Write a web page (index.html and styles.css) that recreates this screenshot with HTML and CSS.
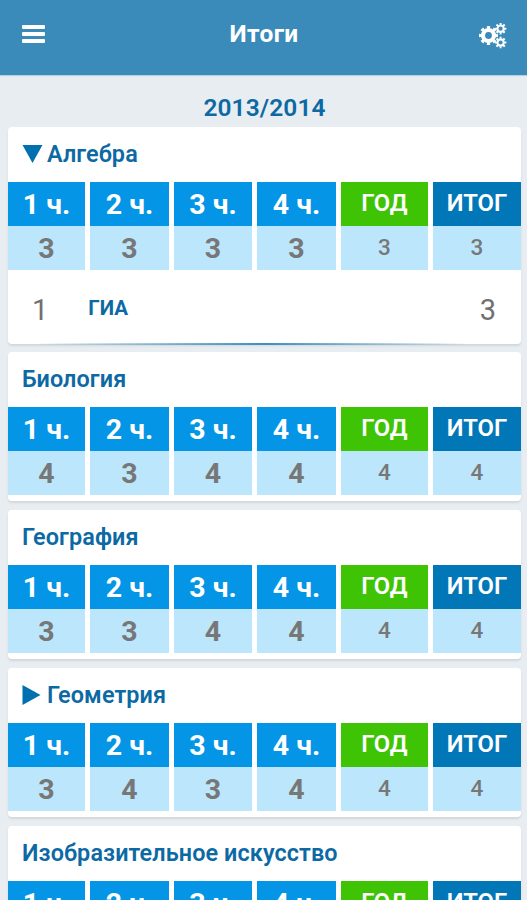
FILE: index.html
```html
<!DOCTYPE html>
<html lang="ru">
<head>
    <meta charset="UTF-8">
    <meta name="viewport" content="width=device-width, initial-scale=1">
    <title>Итоги</title>
    <link rel="stylesheet" href="styles.css">
</head>
<body>
    <header class="topbar">
        <svg class="menu-icon" viewBox="0 0 23 19">
            <rect y="0" width="23" height="4" rx="1"/>
            <rect y="7" width="23" height="4" rx="1"/>
            <rect y="14" width="23" height="4" rx="1"/>
        </svg>
        <h1>Итоги</h1>
        <svg class="settings-icon" viewBox="0 0 28 26">
            <circle class="ring-big" cx="9.5" cy="12.5" r="5.5"/>
            <circle class="teeth-big" cx="9.5" cy="12.5" r="8.2" pathLength="80"/>
            <circle class="ring-small" cx="21.6" cy="5.7" r="3.2"/>
            <circle class="teeth-small" cx="21.6" cy="5.7" r="4.8" pathLength="80"/>
            <circle class="ring-small" cx="21.6" cy="19.5" r="3.2"/>
            <circle class="teeth-small" cx="21.6" cy="19.5" r="4.8" pathLength="80"/>
        </svg>
    </header>

    <main>
        <h2 class="year">2013/2014</h2>

        <section class="card open">
            <h3><svg class="arrow down" viewBox="0 0 20 18"><path d="M0 0h20L10 18z"/></svg><span>Алгебра</span></h3>
            <div class="marks">
                <b>1 ч.</b><b>2 ч.</b><b>3 ч.</b><b>4 ч.</b><b class="god">ГОД</b><b class="itog">ИТОГ</b>
                <i>3</i><i>3</i><i>3</i><i>3</i><i class="small">3</i><i class="small">3</i>
            </div>
            <div class="exam">
                <span class="num">1</span>
                <span class="exam-name">ГИА</span>
                <span class="num">3</span>
            </div>
        </section>

        <section class="card">
            <h3><span>Биология</span></h3>
            <div class="marks">
                <b>1 ч.</b><b>2 ч.</b><b>3 ч.</b><b>4 ч.</b><b class="god">ГОД</b><b class="itog">ИТОГ</b>
                <i>4</i><i>3</i><i>4</i><i>4</i><i class="small">4</i><i class="small">4</i>
            </div>
        </section>

        <section class="card">
            <h3><span>География</span></h3>
            <div class="marks">
                <b>1 ч.</b><b>2 ч.</b><b>3 ч.</b><b>4 ч.</b><b class="god">ГОД</b><b class="itog">ИТОГ</b>
                <i>3</i><i>3</i><i>4</i><i>4</i><i class="small">4</i><i class="small">4</i>
            </div>
        </section>

        <section class="card">
            <h3><svg class="arrow right" viewBox="0 0 18 20"><path d="M0 0l18 10L0 20z"/></svg><span>Геометрия</span></h3>
            <div class="marks">
                <b>1 ч.</b><b>2 ч.</b><b>3 ч.</b><b>4 ч.</b><b class="god">ГОД</b><b class="itog">ИТОГ</b>
                <i>3</i><i>4</i><i>3</i><i>4</i><i class="small">4</i><i class="small">4</i>
            </div>
        </section>

        <section class="card">
            <h3><span>Изобразительное искусство</span></h3>
            <div class="marks">
                <b>1 ч.</b><b>2 ч.</b><b>3 ч.</b><b>4 ч.</b><b class="god">ГОД</b><b class="itog">ИТОГ</b>
            </div>
        </section>
    </main>
</body>
</html>
```
FILE: styles.css
```css
* {
    box-sizing: border-box;
}

body {
    margin: 0;
    height: 900px;
    overflow: hidden;
    background-color: #e8edf1;
    font-family: Roboto, "Liberation Sans", sans-serif;
}

/* Шапка */
.topbar {
    display: flex;
    justify-content: space-between;
    align-items: flex-start;
    height: 75px;
    padding: 0 20px 0 22px;
    background-color: #3b8bba;
    color: #fff;
    box-shadow: 0 1px 1px #b5d3df;
}

.topbar h1 {
    margin: 19px 0 0 4px;
    font-size: 24.5px;
    line-height: 30px;
    font-weight: 700;
    letter-spacing: 0.4px;
}

.menu-icon {
    width: 23px;
    height: 19px;
    margin-top: 25px;
    fill: #fff;
}

.settings-icon {
    width: 28px;
    height: 26px;
    margin-top: 23px;
    fill: none;
    stroke: #fff;
}

.ring-big {
    stroke-width: 4.2;
}

.teeth-big {
    stroke-width: 2.6;
    stroke-dasharray: 5 5;
    stroke-dashoffset: 2.5;
}

.ring-small {
    stroke-width: 2.2;
}

.teeth-small {
    stroke-width: 2;
    stroke-dasharray: 5 5;
    stroke-dashoffset: 2.5;
}

main {
    padding: 17px 6px 0 8px;
}

.year {
    margin: 0 0 5px;
    text-align: center;
    font-size: 24.5px;
    line-height: 31px;
    height: 30px;
    font-weight: 600;
    letter-spacing: 0.1px;
    color: #0c69a3;
}

/* Карточка предмета */
.card {
    height: 149px;
    margin-bottom: 9px;
    background-color: #fff;
    border-radius: 4px;
    box-shadow: 0 2px 2px #d2d8db;
}

.card.open {
    height: 217px;
    margin-bottom: 8px;
}

.card h3 {
    display: flex;
    align-items: center;
    height: 55px;
    margin: 0;
    padding: 0 15px 2px 14px;
    font-size: 23.4px;
    font-weight: 600;
    letter-spacing: 0.1px;
    color: #0c69a3;
}

.arrow {
    margin-right: 4px;
    fill: #0070b0;
}

.arrow.down {
    width: 21px;
    height: 18px;
}

.arrow.right {
    width: 19px;
    height: 20px;
    margin-right: 6px;
}

/* Таблица оценок */
.marks {
    display: grid;
    grid-template-columns: 77px 79px 78px 79px 87px 88px;
    grid-template-rows: 44px 43.5px;
    column-gap: 5px;
}

.marks b,
.marks i {
    display: flex;
    justify-content: center;
    align-items: center;
    font-size: 28.5px;
    font-style: normal;
    font-weight: 700;
}

.marks b {
    padding-top: 1px;
    background-color: #0595e6;
    color: #fff;
}

.marks .god,
.marks .itog {
    padding-bottom: 3px;
    font-size: 23.8px;
    font-weight: 600;
}

.marks .god {
    background-color: #3ec404;
}

.marks .itog {
    background-color: #0277b8;
}

.marks i {
    padding-top: 2px;
    background-color: #bce6fb;
    color: #777;
}

.marks .small {
    padding-bottom: 3px;
    font-size: 22.5px;
    font-weight: 500;
}

/* Строка экзамена */
.exam {
    position: relative;
    display: flex;
    align-items: center;
    height: 75px;
    padding: 5px 25px 0 24px;
}

.exam::after {
    content: "";
    position: absolute;
    left: 0;
    right: 0;
    bottom: 0;
    height: 2px;
    background: linear-gradient(to right, transparent 5%, #3b8fc0 50%, transparent 90%);
}

.num {
    font-size: 29px;
    font-weight: 400;
    color: #707070;
}

.exam-name {
    flex: 1;
    margin-left: 40px;
    padding-bottom: 3px;
    font-size: 20.5px;
    font-weight: 700;
    color: #0c69a3;
}
```
